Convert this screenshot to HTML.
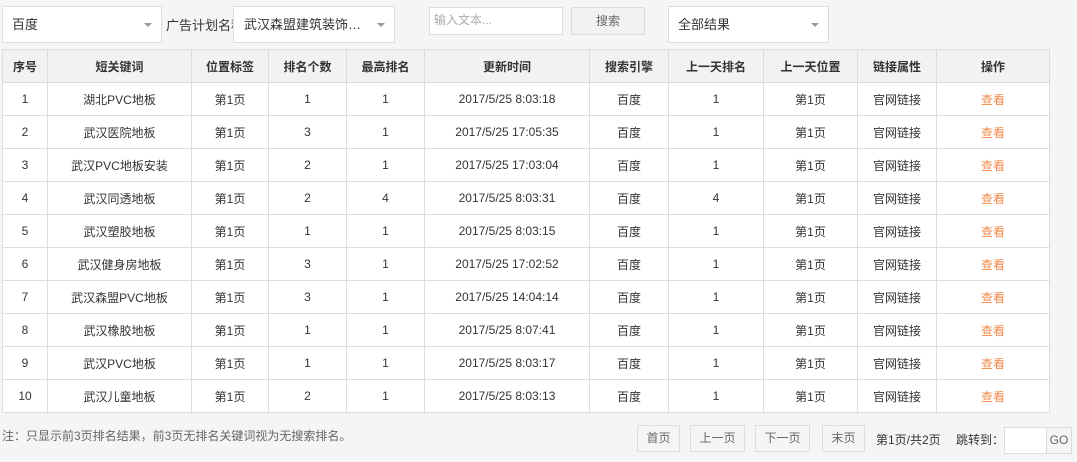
<!DOCTYPE html><html><head><meta charset="utf-8"><style>
*{box-sizing:border-box;margin:0;padding:0}
body{width:1077px;height:462px;background:#f5f5f5;font-family:"Liberation Sans","Noto Sans CJK SC",sans-serif;font-size:12px;color:#333;position:relative;overflow:hidden}
.abs{position:absolute}
.sel{background:#fff;border:1px solid #ddd;padding-left:9px;line-height:35px;font-size:13px}
.sel:after{content:"";position:absolute;right:9px;top:16px;border:4px solid transparent;border-top:4px solid #999}
table{position:absolute;left:2px;top:49px;border-collapse:collapse;background:#fff;table-layout:fixed}
td,th{border:1px solid #ddd;height:33px;text-align:center;font-size:12px}
th{background:#f2f2f2;font-weight:bold;color:#333}
.o{color:#f08a4b}
.btn{border:1px solid #ddd;color:#666;text-align:center;font-size:12px}
</style></head><body>
<div class="abs sel" style="left:2px;top:6px;width:160px;height:37px">百度</div>
<div class="abs" style="left:166px;top:15px;font-size:13px;width:67px;overflow:hidden;white-space:nowrap">广告计划名称</div>
<div class="abs sel" style="left:233px;top:6px;width:162px;height:37px;padding-left:10px"><span style="display:block;width:120px;overflow:hidden;white-space:nowrap;text-overflow:ellipsis">武汉森盟建筑装饰工程有限公司</span></div>
<div class="abs" style="left:429px;top:7px;width:134px;height:28px;background:#fff;border:1px solid #ddd;color:#aaa;padding-left:4px;line-height:24px">输入文本...</div>
<div class="abs btn" style="left:571px;top:7px;width:74px;height:28px;line-height:26px;background:#f2f2f2">搜索</div>
<div class="abs sel" style="left:668px;top:6px;width:161px;height:37px">全部结果</div>
<table>
<colgroup><col style="width:45px"><col style="width:144px"><col style="width:77px"><col style="width:78px"><col style="width:78px"><col style="width:165px"><col style="width:79px"><col style="width:95px"><col style="width:94px"><col style="width:79px"><col style="width:113px"></colgroup>
<tr><th>序号</th><th>短关键词</th><th>位置标签</th><th>排名个数</th><th>最高排名</th><th>更新时间</th><th>搜索引擎</th><th>上一天排名</th><th>上一天位置</th><th>链接属性</th><th>操作</th></tr>
<tr><td>1</td><td>湖北PVC地板</td><td>第1页</td><td>1</td><td>1</td><td>2017/5/25 8:03:18</td><td>百度</td><td>1</td><td>第1页</td><td>官网链接</td><td class="o">查看</td></tr>
<tr><td>2</td><td>武汉医院地板</td><td>第1页</td><td>3</td><td>1</td><td>2017/5/25 17:05:35</td><td>百度</td><td>1</td><td>第1页</td><td>官网链接</td><td class="o">查看</td></tr>
<tr><td>3</td><td>武汉PVC地板安装</td><td>第1页</td><td>2</td><td>1</td><td>2017/5/25 17:03:04</td><td>百度</td><td>1</td><td>第1页</td><td>官网链接</td><td class="o">查看</td></tr>
<tr><td>4</td><td>武汉同透地板</td><td>第1页</td><td>2</td><td>4</td><td>2017/5/25 8:03:31</td><td>百度</td><td>4</td><td>第1页</td><td>官网链接</td><td class="o">查看</td></tr>
<tr><td>5</td><td>武汉塑胶地板</td><td>第1页</td><td>1</td><td>1</td><td>2017/5/25 8:03:15</td><td>百度</td><td>1</td><td>第1页</td><td>官网链接</td><td class="o">查看</td></tr>
<tr><td>6</td><td>武汉健身房地板</td><td>第1页</td><td>3</td><td>1</td><td>2017/5/25 17:02:52</td><td>百度</td><td>1</td><td>第1页</td><td>官网链接</td><td class="o">查看</td></tr>
<tr><td>7</td><td>武汉森盟PVC地板</td><td>第1页</td><td>3</td><td>1</td><td>2017/5/25 14:04:14</td><td>百度</td><td>1</td><td>第1页</td><td>官网链接</td><td class="o">查看</td></tr>
<tr><td>8</td><td>武汉橡胶地板</td><td>第1页</td><td>1</td><td>1</td><td>2017/5/25 8:07:41</td><td>百度</td><td>1</td><td>第1页</td><td>官网链接</td><td class="o">查看</td></tr>
<tr><td>9</td><td>武汉PVC地板</td><td>第1页</td><td>1</td><td>1</td><td>2017/5/25 8:03:17</td><td>百度</td><td>1</td><td>第1页</td><td>官网链接</td><td class="o">查看</td></tr>
<tr><td>10</td><td>武汉儿童地板</td><td>第1页</td><td>2</td><td>1</td><td>2017/5/25 8:03:13</td><td>百度</td><td>1</td><td>第1页</td><td>官网链接</td><td class="o">查看</td></tr>
</table>
<div class="abs" style="left:2px;top:427px;color:#666">注：只显示前3页排名结果，前3页无排名关键词视为无搜索排名。</div>
<div class="abs btn" style="left:637px;top:425px;width:43px;height:27px;line-height:25px">首页</div>
<div class="abs btn" style="left:690px;top:425px;width:55px;height:27px;line-height:25px">上一页</div>
<div class="abs btn" style="left:755px;top:425px;width:55px;height:27px;line-height:25px">下一页</div>
<div class="abs btn" style="left:822px;top:425px;width:43px;height:27px;line-height:25px">末页</div>
<div class="abs" style="left:876px;top:431px">第1页/共2页</div>
<div class="abs" style="left:956px;top:431px">跳转到：</div>
<div class="abs" style="left:1004px;top:427px;width:43px;height:27px;background:#fff;border:1px solid #ddd"></div>
<div class="abs btn" style="left:1046px;top:427px;width:26px;height:27px;line-height:25px">GO</div>
</body></html>
